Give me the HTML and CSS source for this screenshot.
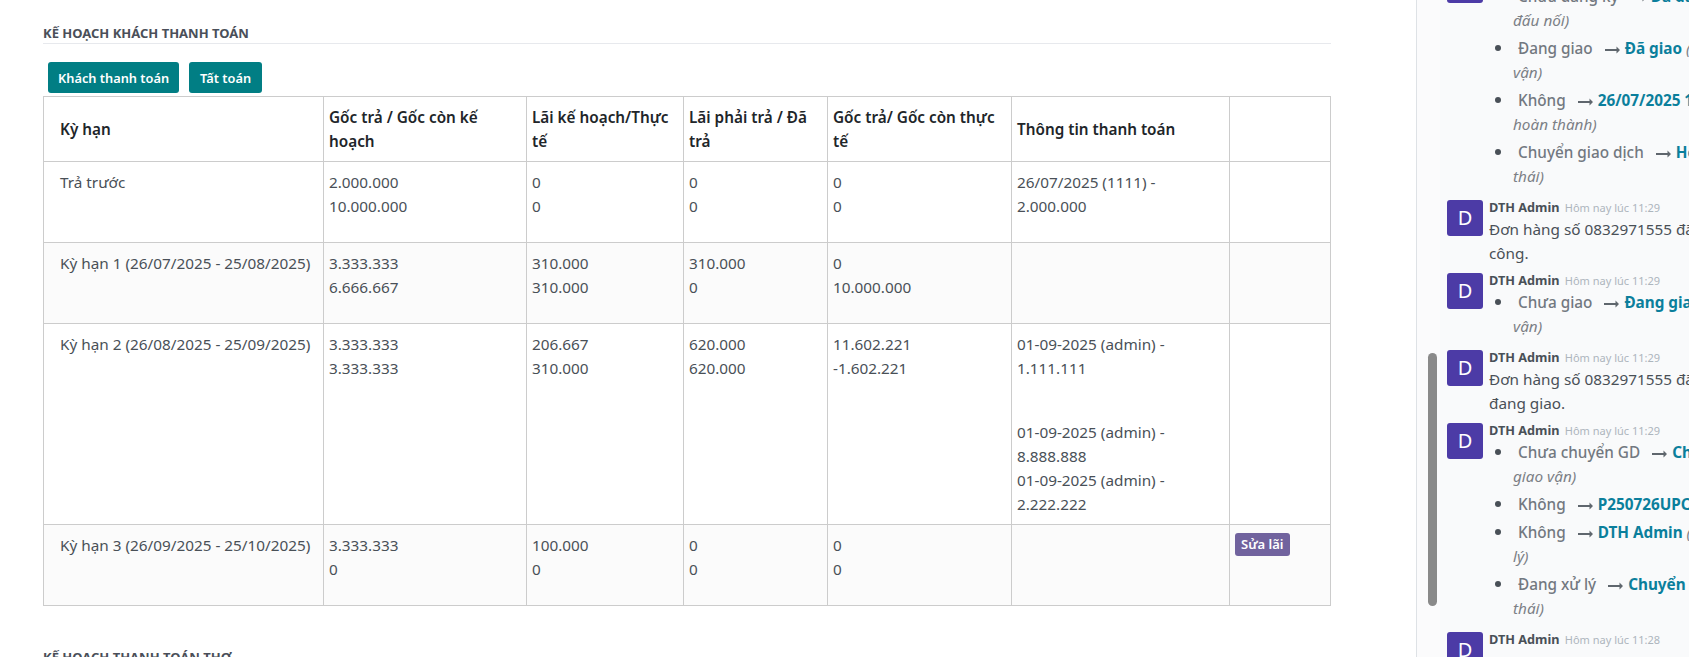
FILE: index.html
```html
<!DOCTYPE html>
<html lang="vi">
<head>
<meta charset="utf-8">
<title>Kế hoạch khách thanh toán</title>
<link rel="stylesheet" href="styles.css">
</head>
<body>
<svg class="defs" width="0" height="0" aria-hidden="true"><symbol id="long-arrow" viewBox="0 0 15 8"><path d="M0 3.1H11.5V0.6L15 4L11.5 7.4V4.9H0Z"/></symbol></svg>
<div class="app">
  <main class="sheet">
    <h5 class="section-title">Kế hoạch khách thanh toán</h5>
    <div class="actions">
      <button class="btn btn-teal">Khách thanh toán</button>
      <button class="btn btn-teal">Tất toán</button>
    </div>
    <table class="plan">
      <colgroup>
        <col class="c1"><col class="c2"><col class="c3"><col class="c4"><col class="c5"><col class="c6"><col class="c7">
      </colgroup>
      <thead>
        <tr>
          <th>Kỳ hạn</th>
          <th>Gốc trả / Gốc còn kế hoạch</th>
          <th>Lãi kế hoạch/Thực tế</th>
          <th>Lãi phải trả / Đã trả</th>
          <th>Gốc trả/ Gốc còn thực tế</th>
          <th>Thông tin thanh toán</th>
          <th></th>
        </tr>
      </thead>
      <tbody>
        <tr>
          <td><p>Trả trước</p></td>
          <td><p>2.000.000<br>10.000.000</p></td>
          <td><p>0<br>0</p></td>
          <td><p>0<br>0</p></td>
          <td><p>0<br>0</p></td>
          <td><p>26/07/2025 (1111) - 2.000.000</p></td>
          <td></td>
        </tr>
        <tr>
          <td><p>Kỳ hạn 1 (26/07/2025 - 25/08/2025)</p></td>
          <td><p>3.333.333<br>6.666.667</p></td>
          <td><p>310.000<br>310.000</p></td>
          <td><p>310.000<br>0</p></td>
          <td><p>0<br>10.000.000</p></td>
          <td></td>
          <td></td>
        </tr>
        <tr>
          <td><p>Kỳ hạn 2 (26/08/2025 - 25/09/2025)</p></td>
          <td><p>3.333.333<br>3.333.333</p></td>
          <td><p>206.667<br>310.000</p></td>
          <td><p>620.000<br>620.000</p></td>
          <td><p>11.602.221<br>-1.602.221</p></td>
          <td>
            <p class="pay-first">01-09-2025 (admin) - 1.111.111</p>
            <div>01-09-2025 (admin) - 8.888.888</div>
            <div>01-09-2025 (admin) - 2.222.222</div>
          </td>
          <td></td>
        </tr>
        <tr>
          <td><p>Kỳ hạn 3 (26/09/2025 - 25/10/2025)</p></td>
          <td><p>3.333.333<br>0</p></td>
          <td><p>100.000<br>0</p></td>
          <td><p>0<br>0</p></td>
          <td><p>0<br>0</p></td>
          <td></td>
          <td><button class="btn btn-purple">Sửa lãi</button></td>
        </tr>
      </tbody>
    </table>
    <h5 class="section-title section-next">Kế hoạch thanh toán thợ</h5>
  </main>

  <aside class="chatter">
    <div class="track"><div class="thumb"></div></div>
    <div class="feed">
      <article class="msg">
        <div class="avatar">D</div>
        <div class="msg-body">
          <div class="msg-head"><b>DTH Admin</b> <time>Hôm nay lúc 11:29</time></div>
          <ul>
            <li><span class="old">Chưa đăng ký</span><svg class="arrow"><use href="#long-arrow"/></svg><span class="new">Đã đăng ký</span> <i>(Trạng thái<br>đấu nối)</i></li>
            <li><span class="old">Đang giao</span><svg class="arrow"><use href="#long-arrow"/></svg><span class="new">Đã giao</span> <i>(Trạng thái giao<br>vận)</i></li>
            <li><span class="old">Không</span><svg class="arrow"><use href="#long-arrow"/></svg><span class="new">26/07/2025 11:29:00</span> <i>(Ngày<br>hoàn thành)</i></li>
            <li><span class="old">Chuyển giao dịch</span><svg class="arrow"><use href="#long-arrow"/></svg><span class="new">Hoàn thành</span> <i>(Trạng<br>thái)</i></li>
          </ul>
        </div>
      </article>
      <article class="msg">
        <div class="avatar">D</div>
        <div class="msg-body">
          <div class="msg-head"><b>DTH Admin</b> <time>Hôm nay lúc 11:29</time></div>
          <p>Đơn hàng số 0832971555 đã giao thành<br>công.</p>
        </div>
      </article>
      <article class="msg">
        <div class="avatar">D</div>
        <div class="msg-body">
          <div class="msg-head"><b>DTH Admin</b> <time>Hôm nay lúc 11:29</time></div>
          <ul>
            <li><span class="old">Chưa giao</span><svg class="arrow"><use href="#long-arrow"/></svg><span class="new">Đang giao</span> <i>(Trạng thái giao<br>vận)</i></li>
          </ul>
        </div>
      </article>
      <article class="msg">
        <div class="avatar">D</div>
        <div class="msg-body">
          <div class="msg-head"><b>DTH Admin</b> <time>Hôm nay lúc 11:29</time></div>
          <p>Đơn hàng số 0832971555 đã chuyển sang<br>đang giao.</p>
        </div>
      </article>
      <article class="msg">
        <div class="avatar">D</div>
        <div class="msg-body">
          <div class="msg-head"><b>DTH Admin</b> <time>Hôm nay lúc 11:29</time></div>
          <ul>
            <li><span class="old">Chưa chuyển GD</span><svg class="arrow"><use href="#long-arrow"/></svg><span class="new">Chuyển giao dịch</span> <i>(Trạng thái<br>giao vận)</i></li>
            <li><span class="old">Không</span><svg class="arrow"><use href="#long-arrow"/></svg><span class="new">P250726UPC</span></li>
            <li><span class="old">Không</span><svg class="arrow"><use href="#long-arrow"/></svg><span class="new">DTH Admin</span> <i>(Người xử<br>lý)</i></li>
            <li><span class="old">Đang xử lý</span><svg class="arrow"><use href="#long-arrow"/></svg><span class="new">Chuyển giao dịch</span> <i>(Trạng<br>thái)</i></li>
          </ul>
        </div>
      </article>
      <article class="msg">
        <div class="avatar">D</div>
        <div class="msg-body">
          <div class="msg-head"><b>DTH Admin</b> <time>Hôm nay lúc 11:28</time></div>
        </div>
      </article>
    </div>
  </aside>
</div>
</body>
</html>
```
FILE: styles.css
```css
* { box-sizing: border-box; }
html, body { margin: 0; height: 100%; overflow: hidden; background: #fff; }
body {
  font-family: "Noto Sans", "Open Sans", sans-serif;
  font-size: 15.3px;
  line-height: 24px;
  color: #495057;
}
.defs { position: absolute; }
.app { display: flex; height: 657px; overflow: hidden; }

.sheet { flex: 0 0 1415px; padding: 23px 85px 0 43px; }
.section-title {
  margin: 0;
  height: 20px;
  font-size: 13px;
  line-height: 20px;
  font-weight: 700;
  text-transform: uppercase;
  color: #4a4f59;
  border-bottom: 1px solid #e7e9ed;
  box-sizing: content-box;
}
.section-next { margin-top: 41px; }
.actions { display: flex; gap: 10px; padding: 18px 0 3px 5px; }
.btn {
  border: 0;
  border-radius: 3px;
  color: #fff;
  font-family: inherit;
  font-weight: 600;
  cursor: pointer;
}
.btn-teal { height: 31px; padding: 0 10px; font-size: 12.8px; background: #017e84; }
.btn-teal + .btn-teal { padding: 0 11px; }
.btn-purple { display: block; height: 23px; padding: 0 6px; font-size: 13px; line-height: 23px; background: #71639e; }

.plan { width: 1287px; table-layout: fixed; border-collapse: collapse; }
.c1 { width: 280px; }
.c2 { width: 203px; }
.c3 { width: 157px; }
.c4 { width: 144px; }
.c5 { width: 184px; }
.c6 { width: 218px; }
.c7 { width: 101px; }
.plan th, .plan td { border: 1px solid #ccc; padding: 8px 5px; text-align: left; vertical-align: top; }
.plan th { padding: 8px 5px; vertical-align: middle; font-weight: 600; color: #212529; }
.plan th:first-child, .plan td:first-child { padding-left: 16px; }
.plan p { margin: 0 0 16px; }
.plan .pay-first { margin-bottom: 40px; }
.plan tbody tr:nth-child(even) { background: #fbfbfb; }

.chatter { position: relative; flex: 0 0 274px; background: #f9fafb; border-left: 1px solid #dee2e6; overflow: hidden; }
.track { position: absolute; top: 0; bottom: 0; left: 0; width: 23px; background: #fbfbfc; }
.thumb { position: absolute; left: 11px; top: 353px; width: 9px; height: 253px; border-radius: 5px; background: #8a8a8a; }
.feed { width: 420px; margin-top: -33px; padding-left: 30px; }
.msg { display: flex; gap: 6px; margin-bottom: 8px; }
.avatar {
  flex: 0 0 36px;
  height: 36px;
  border-radius: 3px;
  background: #4c3ba6;
  color: #fff;
  font-size: 20px;
  line-height: 36px;
  text-align: center;
}
.msg-body { flex: 1; white-space: nowrap; }
.msg-head { height: 17px; line-height: 15px; font-size: 12.7px; }
.msg-head b { font-weight: 700; color: #495057; }
.msg-head time { margin-left: 2px; font-size: 11px; color: #adb5bd; }
.msg-body p { margin: 0; }
.msg-body ul { margin: 0; padding: 0 0 0 24px; list-style: none; }
.msg-body li { position: relative; margin-bottom: 4px; }
.msg-body li::before {
  content: "";
  position: absolute;
  left: -18px;
  top: 9px;
  width: 6px;
  height: 6px;
  border-radius: 50%;
  background: #495057;
}
.old { margin-left: 5px; color: #727880; font-weight: 500; }
.arrow { width: 15px; height: 8px; margin: 0 5px 0 12px; fill: #5f666d; }
.new { color: #0b7f9c; font-weight: 700; }
.msg-body i { color: #7c8086; }
```
